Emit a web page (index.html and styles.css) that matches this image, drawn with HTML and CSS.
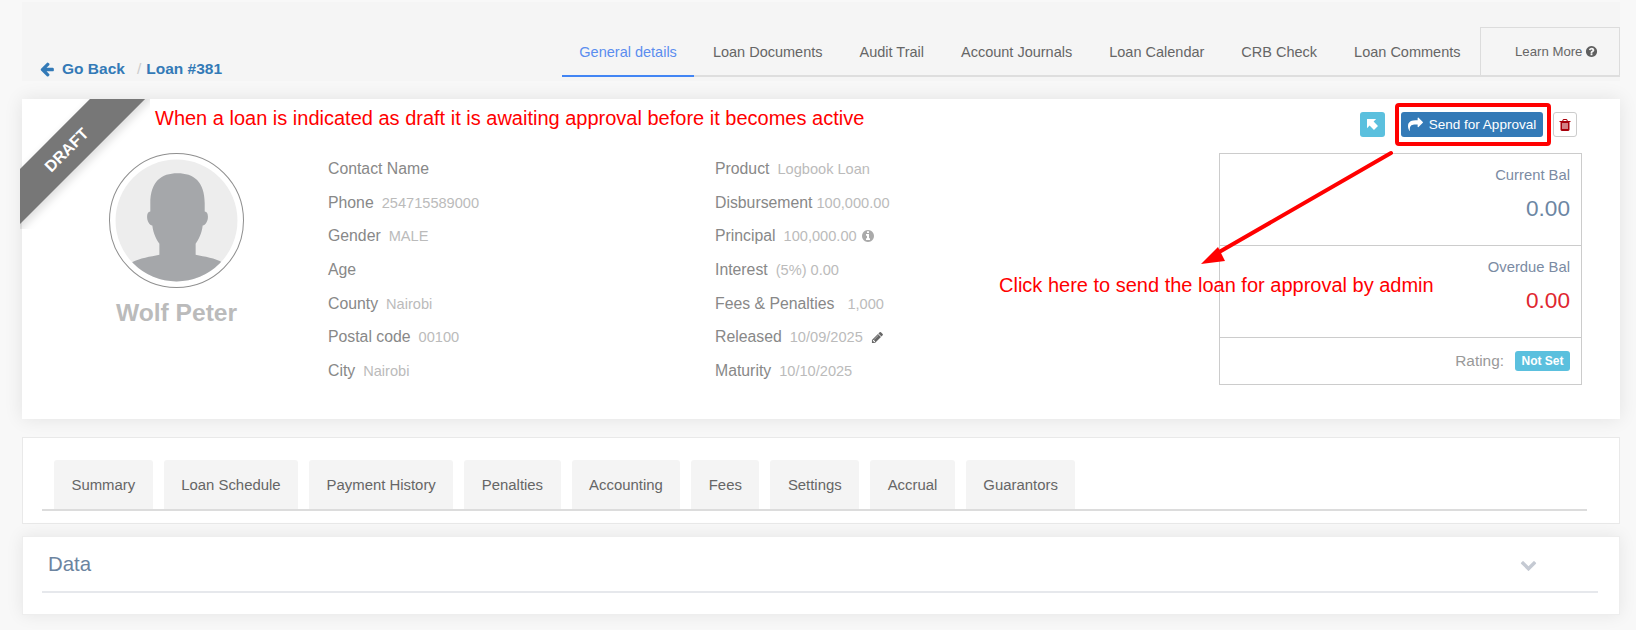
FILE: index.html
```html
<!DOCTYPE html>
<html lang="en">
<head>
<meta charset="utf-8">
<title>Loan #381</title>
<link rel="stylesheet" href="styles.css">
</head>
<body>
<div class="page">
  <header class="topbar">
    <div class="crumbs">
      <svg class="ico-back" viewBox="0 0 1792 1792"><path d="M1664 896v128q0 53-32.5 90.5t-84.5 37.5h-704l293 294q38 36 38 90t-38 90l-75 76q-37 37-90 37-52 0-91-37l-651-652q-37-37-37-90 0-52 37-91l651-650q38-38 91-38 52 0 90 38l75 74q38 38 38 91t-38 91l-293 293h704q52 0 84.5 37.5t32.5 90.5z"/></svg>
      <span class="crumb-back">Go Back</span><span class="crumb-sep">/</span><span class="crumb-cur">Loan #381</span>
    </div>
    <nav class="nav">
      <a class="nav-item active">General details</a>
      <a class="nav-item">Loan Documents</a>
      <a class="nav-item">Audit Trail</a>
      <a class="nav-item">Account Journals</a>
      <a class="nav-item">Loan Calendar</a>
      <a class="nav-item">CRB Check</a>
      <a class="nav-item">Loan Comments</a>
      <a class="nav-learn">Learn More <svg class="ico-q" viewBox="0 0 1792 1792"><path d="M1024 1376v-192q0-14-9-23t-23-9h-192q-14 0-23 9t-9 23v192q0 14 9 23t23 9h192q14 0 23-9t9-23zm256-672q0-88-55.5-163t-138.5-116-170-41q-243 0-371 213-15 24 8 42l132 100q7 6 19 6 16 0 25-12 53-68 86-92 34-24 86-24 48 0 85.5 26t37.5 59q0 38-20 61t-68 45q-63 28-115.5 86.5t-52.5 125.5v36q0 14 9 23t23 9h192q14 0 23-9t9-23q0-19 21.5-49.5t54.5-49.5q32-18 49-28.5t46-35 44.5-48 28-60.5 12.5-81zm384 192q0 209-103 385.5t-279.5 279.5-385.5 103-385.5-103-279.5-279.5-103-385.5 103-385.5 279.5-279.5 385.5-103 385.5 103 279.5 279.5 103 385.5z"/></svg></a>
    </nav>
  </header>

  <section class="card">
    <div class="ribbon-wrap"><div class="ribbon">DRAFT</div></div>
    <div class="actions">
      <button class="btn btn-info"><svg class="ico-expand" viewBox="0 0 12 12"><path d="M0 0h10L7.2 2.8 12 7.6 7.6 12 2.8 7.2 0 10z"/></svg></button>
      <button class="btn btn-primary"><svg class="ico-share" viewBox="0 0 1792 1792"><path d="M1792 640q0 26-19 45l-512 512q-19 19-45 19t-45-19-19-45v-256h-224q-98 0-175.5 6t-154 21.5-133 42.5-105.5 69.5-80 101-48.5 138.5-17.5 181q0 55 5 123 0 6 2.5 23.5t2.5 26.5q0 15-8.5 25t-23.5 10q-16 0-28-17-7-9-13-22t-13.5-30-10.5-24q-127-285-127-451 0-199 53-333 162-403 875-403h224v-256q0-26 19-45t45-19 45 19l512 512q19 19 19 45z"/></svg>Send for Approval</button>
      <button class="btn btn-del"><svg class="ico-trash" viewBox="0 0 1792 1792"><path d="M704 1376v-704q0-14-9-23t-23-9h-64q-14 0-23 9t-9 23v704q0 14 9 23t23 9h64q14 0 23-9t9-23zm256 0v-704q0-14-9-23t-23-9h-64q-14 0-23 9t-9 23v704q0 14 9 23t23 9h64q14 0 23-9t9-23zm256 0v-704q0-14-9-23t-23-9h-64q-14 0-23 9t-9 23v704q0 14 9 23t23 9h64q14 0 23-9t9-23zm-544-992h448l-48-117q-7-9-17-11h-317q-10 2-17 11zm928 32v64q0 14-9 23t-23 9h-96v948q0 83-47 143.5t-113 60.5h-832q-66 0-113-58.5t-47-141.5v-952h-96q-14 0-23-9t-9-23v-64q0-14 9-23t23-9h309l70-167q15-37 54-63t79-26h320q40 0 79 26t54 63l70 167h309q14 0 23 9t9 23z"/></svg></button>
    </div>
    <div class="card-body">
      <div class="profile">
        <svg class="avatar" viewBox="0 0 134 134">
          <defs><clipPath id="disc"><circle cx="67" cy="67" r="60.5"/></clipPath></defs>
          <circle cx="67" cy="67" r="66.5" fill="#fff" stroke="#8f8f8f"/>
          <circle cx="67" cy="67" r="60.5" fill="#ededed"/>
          <path clip-path="url(#disc)" fill="#a5a7aa" d="M68 20C52 20 41 28 41 50L41 58C36 58 37 71 43 72C44 80 47 86 50 90L50 101C41 103 31 104 22 109L10 130L126 130L113 109C105 104 95 103 86 101L86 90C89 86 92 80 93 72C99 71 100 58 95 58L95 50C95 28 84 20 68 20Z"/>
        </svg>
        <div class="name">Wolf Peter</div>
      </div>
      <div class="col col-a">
        <div class="row"><span class="lbl">Contact Name</span></div>
        <div class="row"><span class="lbl">Phone</span><span class="val">254715589000</span></div>
        <div class="row"><span class="lbl">Gender</span><span class="val">MALE</span></div>
        <div class="row"><span class="lbl">Age</span></div>
        <div class="row"><span class="lbl">County</span><span class="val">Nairobi</span></div>
        <div class="row"><span class="lbl">Postal code</span><span class="val">00100</span></div>
        <div class="row"><span class="lbl">City</span><span class="val">Nairobi</span></div>
      </div>
      <div class="col col-b">
        <div class="row"><span class="lbl">Product</span><span class="val">Logbook Loan</span></div>
        <div class="row"><span class="lbl">Disbursement</span><span class="val val-tight">100,000.00</span></div>
        <div class="row"><span class="lbl">Principal</span><span class="val">100,000.00</span><svg class="ico-info" viewBox="0 0 1792 1792"><path d="M1152 1376v-160q0-14-9-23t-23-9h-96v-512q0-14-9-23t-23-9h-320q-14 0-23 9t-9 23v160q0 14 9 23t23 9h96v320h-96q-14 0-23 9t-9 23v160q0 14 9 23t23 9h448q14 0 23-9t9-23zm-128-896v-160q0-14-9-23t-23-9h-192q-14 0-23 9t-9 23v160q0 14 9 23t23 9h192q14 0 23-9t9-23zm640 416q0 209-103 385.5t-279.5 279.5-385.5 103-385.5-103-279.5-279.5-103-385.5 103-385.5 279.5-279.5 385.5-103 385.5 103 279.5 279.5 103 385.5z"/></svg></div>
        <div class="row"><span class="lbl">Interest</span><span class="val">(5%) 0.00</span></div>
        <div class="row"><span class="lbl">Fees &amp; Penalties</span><span class="val val-wide">1,000</span></div>
        <div class="row"><span class="lbl">Released</span><span class="val">10/09/2025</span><svg class="ico-pencil" viewBox="0 0 1792 1792"><path d="M491 1536l91-91-235-235-91 91v107h128v128h107zm523-928q0-22-22-22-10 0-17 7l-542 542q-7 7-7 17 0 22 22 22 10 0 17-7l542-542q7-7 7-17zm-54-192l416 416-832 832h-416v-416zm683 96q0 53-37 90l-166 166-416-416 166-165q36-38 90-38 53 0 91 38l235 234q37 39 37 91z"/></svg></div>
        <div class="row"><span class="lbl">Maturity</span><span class="val">10/10/2025</span></div>
      </div>
      <aside class="balances">
        <div class="bal">
          <div class="bal-label">Current Bal</div>
          <div class="bal-amt">0.00</div>
        </div>
        <div class="bal">
          <div class="bal-label">Overdue Bal</div>
          <div class="bal-amt bal-red">0.00</div>
        </div>
        <div class="rating"><span class="rating-label">Rating:</span><span class="badge">Not Set</span></div>
      </aside>
    </div>
  </section>

  <section class="tabs-panel">
    <div class="tabs">
      <a class="tab">Summary</a>
      <a class="tab">Loan Schedule</a>
      <a class="tab">Payment History</a>
      <a class="tab">Penalties</a>
      <a class="tab">Accounting</a>
      <a class="tab">Fees</a>
      <a class="tab">Settings</a>
      <a class="tab">Accrual</a>
      <a class="tab">Guarantors</a>
    </div>
  </section>

  <section class="data-panel">
    <div class="data-head">
      <span class="data-title">Data</span>
      <svg class="ico-chev" viewBox="0 0 1792 1792"><path d="M1683 808l-742 741q-19 19-45 19t-45-19l-742-741q-19-19-19-45.5t19-45.5l166-165q19-19 45-19t45 19l531 531 531-531q19-19 45-19t45 19l166 165q19 19 19 45.5t-19 45.5z"/></svg>
    </div>
  </section>

  <div class="note note-top">When a loan is indicated as draft it is awaiting approval before it becomes active</div>
  <div class="note note-mid">Click here to send the loan for approval by admin</div>
  <svg class="markup" viewBox="0 0 1636 630" width="1636" height="630">
    <rect x="1397" y="105" width="152" height="39" rx="2" fill="none" stroke="#f00" stroke-width="4"/>
    <path d="M1391 153L1214 255" fill="none" stroke="#f00" stroke-width="4" stroke-linecap="round"/>
    <path d="M1201 264L1218 247L1225 261Z" fill="#f00"/>
  </svg>
</div>
</body>
</html>
```

FILE: styles.css
```css
* { box-sizing: border-box; }
html, body { margin: 0; padding: 0; }
body {
  background: #f8f8f8;
  font-family: "Liberation Sans", Arial, sans-serif;
  color: #888;
  overflow: hidden;
}
.page {
  position: relative;
  width: 1636px;
  height: 630px;
  padding: 2px 16px 0 22px;
  overflow: hidden;
}
.topbar {
  display: flex;
  justify-content: space-between;
  align-items: flex-end;
  height: 79px;
  padding-bottom: 4px;
  background: #f5f5f5;
}
.crumbs {
  display: flex;
  align-items: center;
  padding-left: 17px;
  height: 21px;
  font-size: 15.5px;
  font-weight: 700;
  color: #337ab7;
  margin-bottom: -2px;
}
.ico-back { width: 16px; height: 16px; fill: #337ab7; margin-right: 7px; }
.crumb-sep { color: #ccc; font-weight: 400; margin: 0 5px 0 12px; }
.nav {
  display: flex;
  align-items: flex-end;
  height: 50px;
  border-bottom: 2px solid #dedede;
}
.nav-item {
  display: block;
  padding: 0 18.5px;
  height: 50px;
  line-height: 50px;
  font-size: 14.5px;
  color: #666;
  margin-bottom: -2px;
}
.nav-item.active {
  color: #5b8def;
  border-bottom: 2px solid #4285f4;
  padding: 0 17.5px 0 17px;
}
.nav-learn {
  display: flex;
  align-items: center;
  gap: 3px;
  width: 140px;
  height: 48px;
  padding-left: 34px;
  margin-left: 1px;
  font-size: 13.2px;
  color: #666;
  border: 1px solid #dcdcdc;
  border-bottom: 0;
}
.ico-q { width: 13px; height: 13px; fill: #5f5f5f; }

.card {
  position: relative;
  height: 320px;
  margin-top: 18px;
  background: #fff;
  box-shadow: 0 0 18px rgba(0, 0, 0, .09);
  padding: 13px 43px 0 0;
}
.ribbon-wrap {
  position: absolute;
  left: -2px;
  top: 0;
  width: 130px;
  height: 130px;
  overflow: hidden;
}
.ribbon {
  position: absolute;
  left: -71px;
  top: 29px;
  width: 240px;
  height: 39px;
  line-height: 39px;
  padding-right: 7px;
  background: #777;
  color: #fff;
  font-size: 16px;
  font-weight: 700;
  text-align: center;
  transform: rotate(-45deg);
  box-shadow: 0 4px 10px rgba(0, 0, 0, .14);
}
.actions { display: flex; justify-content: flex-end; align-items: center; height: 25px; }
.btn {
  display: flex;
  align-items: center;
  justify-content: center;
  height: 25px;
  border-radius: 3px;
  padding: 0;
  font-family: inherit;
  border: 1px solid transparent;
}
.btn-info { width: 25px; background: #5bc0de; margin-right: 16px; }
.ico-expand { width: 11px; height: 11px; fill: #fff; }
.btn-primary {
  width: 142px;
  background: #337ab7;
  color: #fff;
  font-size: 13.5px;
  margin-right: 10px;
}
.ico-share { width: 15px; height: 15px; fill: #fff; margin-right: 6px; }
.btn-del { width: 24px; background: #fff; border-color: #ccc; }
.ico-trash { width: 14px; height: 14px; fill: #a8000b; }

.card-body { display: flex; margin-top: 14px; }
.profile { width: 306px; text-align: center; padding: 2px 0 0 3px; }
.avatar { display: block; width: 135px; height: 135px; margin: 0 auto; }
.name { margin-top: 11px; font-size: 24.6px; line-height: 28px; font-weight: 700; color: #bbb; }
.col { flex: none; padding-top: 1px; }
.col-a { width: 387px; }
.col-b { width: 504px; }
.row { display: flex; align-items: center; height: 33.7px; font-size: 15.8px; }
.lbl { color: #888; }
.val { color: #bbb; font-size: 14.6px; margin-left: 8px; }
.val-tight { margin-left: 4px; }
.val-wide { margin-left: 13px; }
.ico-info { width: 14px; height: 14px; fill: #aaa; margin-left: 4px; }
.ico-pencil { width: 13px; height: 13px; fill: #666; margin-left: 8px; }

.balances {
  width: 363px;
  height: 232px;
  margin: 2px -37px 0 0;
  flex: none;
  border: 1px solid #ccc;
  text-align: right;
}
.bal { height: 92px; padding: 13px 11px 0 0; border-bottom: 1px solid #ccc; }
.bal-label { font-size: 14.8px; line-height: 16px; color: #7b8ba3; }
.bal-amt { margin-top: 13px; font-size: 22.6px; line-height: 26px; color: #6c86a3; }
.bal-red { color: #e0262f; }
.rating { display: flex; justify-content: flex-end; align-items: center; height: 46px; padding-right: 11px; }
.rating-label { font-size: 15.4px; color: #999; margin-right: 11px; }
.badge {
  display: block;
  width: 55px;
  height: 20px;
  line-height: 20px;
  border-radius: 3px;
  background: #5bc0de;
  color: #fff;
  font-size: 12px;
  font-weight: 700;
  text-align: center;
}

.tabs-panel {
  height: 87px;
  margin-top: 18px;
  padding: 22px 32px 0 19px;
  background: #fff;
  border: 1px solid #e9e9e9;
}
.tabs {
  display: flex;
  gap: 11px;
  height: 51px;
  padding-left: 12px;
  border-bottom: 2px solid #dcdcdc;
}
.tab {
  display: block;
  height: 49px;
  line-height: 50px;
  padding: 0 17.5px;
  background: #f4f4f4;
  border-radius: 3px 3px 0 0;
  font-size: 14.9px;
  color: #666;
}
.data-panel {
  height: 79px;
  margin-top: 12px;
  padding: 0 21px 0 19px;
  background: #fff;
  border: 1px solid #eee;
  box-shadow: 0 0 16px rgba(0, 0, 0, .08);
}
.data-head {
  display: flex;
  justify-content: space-between;
  align-items: center;
  height: 56px;
  padding: 1px 61px 0 6px;
  border-bottom: 2px solid #e6e8ec;
}
.data-title { font-size: 20.4px; color: #6c84a0; }
.ico-chev { width: 17px; height: 17px; fill: #c5cad3; }

.note {
  position: absolute;
  color: #f00;
  font-size: 20px;
  line-height: 24px;
  white-space: nowrap;
}
.note-top { left: 155px; top: 106px; }
.note-mid { left: 999px; top: 273px; }
.markup { position: absolute; left: 0; top: 0; pointer-events: none; }
```
